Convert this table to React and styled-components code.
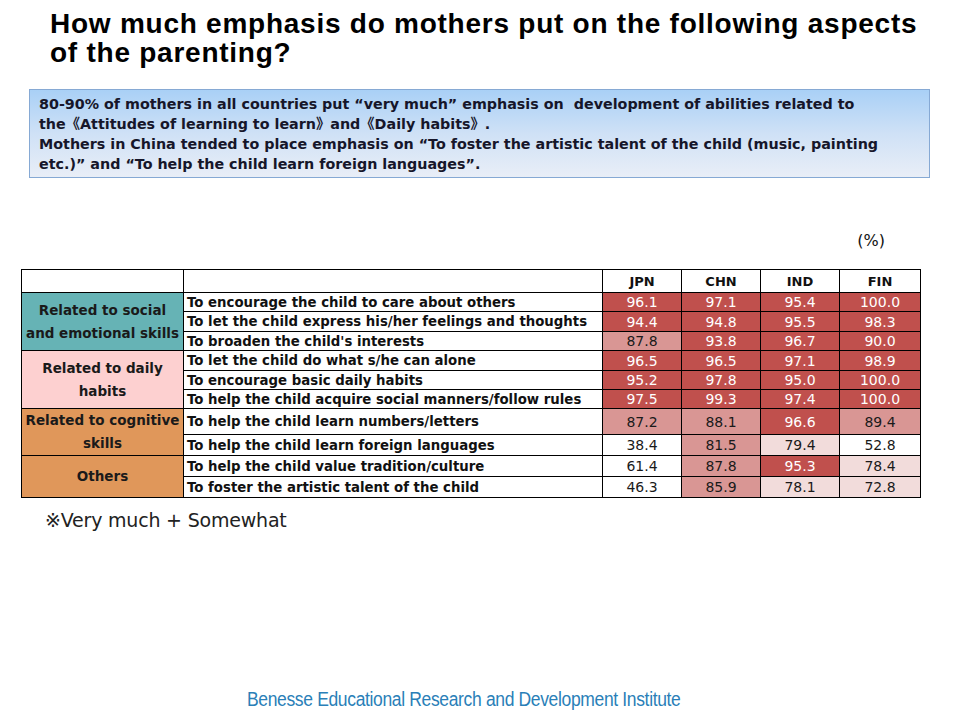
import React from "react";
import styled, { createGlobalStyle } from "styled-components";

const GlobalStyle = createGlobalStyle`
  html, body {
    margin: 0;
    padding: 0;
    background: #ffffff;
  }
`;

const Page = styled.div`
  width: 960px;
  height: 720px;
  display: flex;
  flex-direction: column;
  background: #ffffff;
  overflow: hidden;
`;

const Title = styled.h1`
  margin: 9px 0 0 50px;
  font-family: "Liberation Sans", Arial, sans-serif;
  font-weight: bold;
  font-size: 28px;
  line-height: 29px;
  color: #000000;
  letter-spacing: 0.75px;
  white-space: nowrap;
`;

const Summary = styled.div`
  margin: 22px 0 0 29px;
  width: 881px;
  height: 79px;
  padding: 4px 9px 4px 9px;
  border: 1px solid #86a9d4;
  background: linear-gradient(to bottom, #a9d0f6 0%, #cfe1f6 50%, #e9eef7 100%);
  font-family: "DejaVu Sans", Verdana, "Noto Sans CJK JP", sans-serif;
  font-weight: bold;
  font-size: 14.3px;
  line-height: 20px;
  color: #16162a;
  white-space: nowrap;
`;

const Unit = styled.div`
  margin: 53px 0 0 0;
  width: 885px;
  text-align: right;
  font-family: "DejaVu Sans", Verdana, sans-serif;
  font-size: 16px;
  line-height: 20px;
  color: #111111;
`;

const Table = styled.table`
  margin: 18px 0 0 21px;
  width: 899px;
  border-collapse: collapse;
  table-layout: fixed;
  font-family: "DejaVu Sans", Verdana, sans-serif;
  font-size: 13.3px;
  color: #111111;

  td, th {
    border: 1px solid #000000;
    padding: 0;
  }
`;

const Row = styled.tr`
  height: ${p => p.$h}px;
`;

const HeadCell = styled.th`
  font-weight: bold;
  font-size: 13px;
  text-align: center;
  background: #ffffff;
`;

const categoryColors = {
  social: "#66b3b5",
  daily: "#fdd0d0",
  cognitive: "#e0975a",
  others: "#e0975a"
};

const Category = styled.td`
  background: ${p => categoryColors[p.$kind]};
  font-weight: bold;
  font-size: 13.5px;
  line-height: 23px;
  text-align: center;
  vertical-align: middle;
  color: #1a1a1a;
`;

const Item = styled.td`
  font-weight: bold;
  padding-left: 3px !important;
  white-space: nowrap;
  overflow: hidden;
  background: #ffffff;
`;

const shades = {
  strong: { bg: "#c0504d", fg: "#ffffff" },
  medium: { bg: "#d99694", fg: "#1a1a1a" },
  light: { bg: "#f2dcdb", fg: "#1a1a1a" },
  none: { bg: "#ffffff", fg: "#1a1a1a" }
};

const shadeFor = v => {
  if (v >= 90) return "strong";
  if (v >= 80) return "medium";
  if (v >= 70) return "light";
  return "none";
};

const Value = styled.td`
  text-align: center;
  font-size: 14px;
  background: ${p => shades[p.$shade].bg};
  color: ${p => shades[p.$shade].fg};
`;

const Note = styled.div`
  margin: 11px 0 0 45px;
  font-family: "DejaVu Sans", Verdana, sans-serif;
  font-size: 19px;
  line-height: 22px;
  color: #222222;
  letter-spacing: -0.2px;
`;

const Footer = styled.div`
  margin: 156px 0 0 247px;
  font-family: "Liberation Sans", Arial, sans-serif;
  font-size: 20px;
  line-height: 24px;
  color: #2a7fb8;
  letter-spacing: -0.4px;
  white-space: nowrap;
  transform: scaleX(0.875);
  transform-origin: left center;
`;

const rows = [
  { cat: "social", label: "Related to social\nand emotional skills", span: 3, item: "To encourage the child to care about others", v: [96.1, 97.1, 95.4, 100.0], h: 19 },
  { item: "To let the child express his/her feelings and thoughts", v: [94.4, 94.8, 95.5, 98.3], h: 20 },
  { item: "To broaden the child's interests", v: [87.8, 93.8, 96.7, 90.0], h: 19 },
  { cat: "daily", label: "Related to daily\nhabits", span: 3, item: "To let the child do what s/he can alone", v: [96.5, 96.5, 97.1, 98.9], h: 20 },
  { item: "To encourage basic daily habits", v: [95.2, 97.8, 95.0, 100.0], h: 19 },
  { item: "To help the child acquire social manners/follow rules", v: [97.5, 99.3, 97.4, 100.0], h: 19 },
  { cat: "cognitive", label: "Related to cognitive\nskills", span: 2, item: "To help the child learn numbers/letters", v: [87.2, 88.1, 96.6, 89.4], h: 26 },
  { item: "To help the child learn foreign languages", v: [38.4, 81.5, 79.4, 52.8], h: 21 },
  { cat: "others", label: "Others", span: 2, item: "To help the child value tradition/culture", v: [61.4, 87.8, 95.3, 78.4], h: 21 },
  { item: "To foster the artistic talent of the child", v: [46.3, 85.9, 78.1, 72.8], h: 21 }
];

const Multiline = ({ text }) =>
  text.split("\n").map((line, i) => (
    <React.Fragment key={i}>
      {i > 0 && <br />}
      {line}
    </React.Fragment>
  ));

const App = () => (
  <>
    <GlobalStyle />
    <Page>
      <Title>
        How much emphasis do mothers put on the following aspects
        <br />
        of the parenting?
      </Title>
      <Summary>
        80-90% of mothers in all countries put “very much” emphasis on &nbsp;development of abilities related to
        <br />
        the《Attitudes of learning to learn》and《Daily habits》.
        <br />
        Mothers in China tended to place emphasis on “To foster the artistic talent of the child (music, painting
        <br />
        etc.)” and “To help the child learn foreign languages”.
      </Summary>
      <Unit>(%)</Unit>
      <Table>
        <colgroup>
          <col style={{ width: 162 }} />
          <col style={{ width: 419 }} />
          <col style={{ width: 79 }} />
          <col style={{ width: 79 }} />
          <col style={{ width: 79 }} />
          <col style={{ width: 81 }} />
        </colgroup>
        <tbody>
          <Row $h={23}>
            <HeadCell />
            <HeadCell />
            <HeadCell>JPN</HeadCell>
            <HeadCell>CHN</HeadCell>
            <HeadCell>IND</HeadCell>
            <HeadCell>FIN</HeadCell>
          </Row>
          {rows.map(r => (
            <Row key={r.item} $h={r.h}>
              {r.cat && (
                <Category $kind={r.cat} rowSpan={r.span}>
                  <Multiline text={r.label} />
                </Category>
              )}
              <Item>{r.item}</Item>
              {r.v.map((n, i) => (
                <Value key={i} $shade={shadeFor(n)}>
                  {n.toFixed(1)}
                </Value>
              ))}
            </Row>
          ))}
        </tbody>
      </Table>
      <Note>※Very much + Somewhat</Note>
      <Footer>Benesse Educational Research and Development Institute</Footer>
    </Page>
  </>
);

export default App;
